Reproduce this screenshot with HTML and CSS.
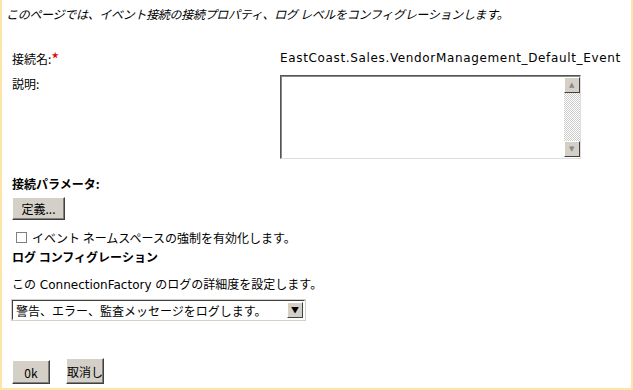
FILE: index.html
```html
<!DOCTYPE html>
<html lang="ja">
<head>
    <meta charset="UTF-8">
    <title>イベント接続</title>
    <link rel="stylesheet" href="styles.css">
</head>
<body>
    <div class="page">
        <p class="intro">このページでは、イベント接続の接続プロパティ、ログ レベルをコンフィグレーションします。</p>

        <div class="fields">
            <div class="label">接続名:<span class="req">*</span></div>
            <div class="value">EastCoast.Sales.VendorManagement_Default_Event</div>
            <div class="label">説明:</div>
            <div class="value">
                <div class="textarea">
                    <div class="scroll">
                        <span class="arrow">&#9650;</span>
                        <span class="track"></span>
                        <span class="arrow">&#9660;</span>
                    </div>
                </div>
            </div>
        </div>

        <div class="heading">接続パラメータ:</div>
        <button class="btn define">定義...</button>
        <label class="check"><span class="box"></span>イベント ネームスペースの強制を有効化します。</label>

        <div class="heading log">ログ コンフィグレーション</div>
        <p class="desc">この ConnectionFactory のログの詳細度を設定します。</p>
        <div class="select">
            <span class="sel-text">警告、エラー、監査メッセージをログします。</span>
            <span class="sel-btn">&#9660;</span>
        </div>

        <div class="actions">
            <button class="btn ok">0k</button>
            <button class="btn cancel">取消し</button>
        </div>
    </div>
</body>
</html>
```

FILE: styles.css
```css
body {
    margin: 0;
    font-family: "DejaVu Sans", "Noto Sans CJK JP", sans-serif;
    font-size: 12px;
    color: #000;
    background: #fff;
}
.page {
    height: 388px;
    border: 2px solid #fde5a8;
    border-top: none;
    padding: 0 0 0 4px;
    overflow: hidden;
}
.intro {
    margin: 0;
    padding-top: 5px;
    font-style: italic;
    font-family: "Noto Sans CJK JP", sans-serif;
    letter-spacing: -0.3px;
}
.fields {
    display: grid;
    grid-template-columns: 268px auto;
    row-gap: 8px;
    margin-top: 28px;
    padding-left: 6px;
}
.label {
    font-family: "Noto Sans CJK JP", sans-serif;
}
.req {
    color: #e00000;
    font-size: 17px;
    line-height: 12px;
    vertical-align: -2px;
}
.value {
    line-height: 16px;
    letter-spacing: 0.65px;
}
.textarea {
    width: 301px;
    height: 84px;
    border: 1px solid;
    border-color: #555 #ddd #ddd #555;
    box-shadow: inset 1px 1px 0 #888;
    display: flex;
    justify-content: flex-end;
    box-sizing: border-box;
    padding: 1px 0 1px;
}
.scroll {
    width: 16px;
    display: flex;
    flex-direction: column;
    background: repeating-conic-gradient(#ccc 0 25%, #fff 0 50%) 0 0 / 2px 2px;
}
.arrow {
    height: 16px;
    background: #d4d0c8;
    border: 1px solid;
    border-color: #fff #404040 #404040 #fff;
    box-sizing: border-box;
    font-size: 7px;
    color: #888;
    text-align: center;
    line-height: 14px;
}
.track {
    flex: 1;
}
.heading {
    font-weight: bold;
    font-family: "Noto Sans CJK JP", sans-serif;
    margin: 16px 0 0 6px;
}
.heading.log {
    margin-top: 2px;
}
.btn {
    font-family: "Noto Sans CJK JP", sans-serif;
    font-size: 12px;
    background: #d4d0c8;
    border: 1px solid;
    border-color: #fff #404040 #404040 #fff;
    box-shadow: inset -1px -1px 0 #808080;
    padding: 0;
    color: #000;
}
.define {
    display: block;
    margin: 5px 0 0 6px;
    width: 53px;
    height: 23px;
}
.check {
    display: flex;
    align-items: center;
    margin: 9px 0 0 10px;
    font-family: "Noto Sans CJK JP", sans-serif;
    gap: 5px;
}
.box {
    width: 9px;
    height: 9px;
    border: 1px solid #808080;
    background: #fff;
}
.desc {
    margin: 10px 0 0 6px;
}
.select {
    display: flex;
    width: 293px;
    height: 20px;
    margin: 8px 0 0 6px;
    border: 1px solid;
    border-color: #404040 #fff #fff #404040;
    box-shadow: 0 0 0 1px #d4d0c8;
    box-sizing: border-box;
    align-items: center;
    font-family: "Noto Sans CJK JP", sans-serif;
}
.sel-text {
    flex: 1;
    padding-left: 3px;
}
.sel-btn {
    width: 16px;
    height: 16px;
    margin-right: 1px;
    background: #d4d0c8;
    border: 1px solid;
    border-color: #fff #404040 #404040 #fff;
    box-sizing: border-box;
    font-size: 8px;
    text-align: center;
    line-height: 14px;
}
.actions {
    display: flex;
    align-items: flex-end;
    gap: 16px;
    margin: 38px 0 0 6px;
}
.ok {
    width: 38px;
    height: 24px;
}
.cancel {
    width: 38px;
    height: 26px;
}
```
